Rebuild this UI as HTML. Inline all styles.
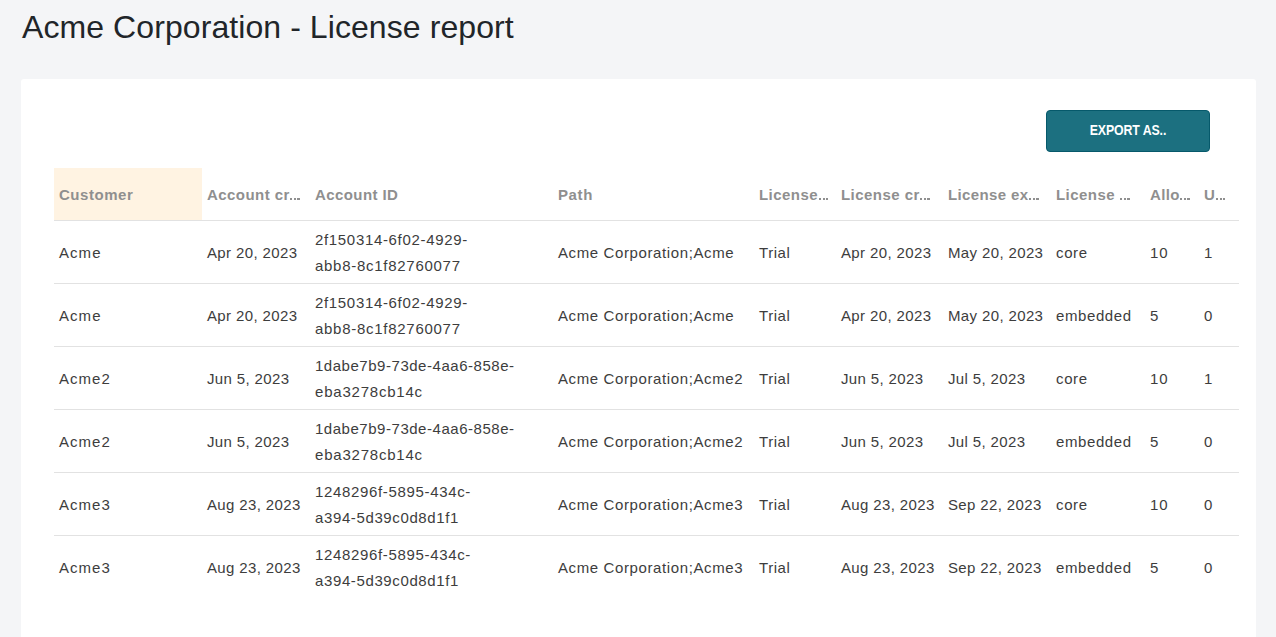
<!DOCTYPE html>
<html>
<head>
<meta charset="utf-8">
<style>
html,body{margin:0;padding:0;}
body{width:1276px;height:637px;overflow:hidden;background:#f4f5f7;position:relative;font-family:"Liberation Sans",sans-serif;}
.title{position:absolute;left:22px;top:7px;font-size:32px;line-height:40px;color:#212529;white-space:nowrap;letter-spacing:0.08px;}
.card{position:absolute;left:21px;top:79px;width:1235px;height:600px;background:#fff;border-radius:3px;}
.btn{position:absolute;left:1046px;top:110px;width:164px;height:42px;box-sizing:border-box;background:#1c7080;border:1px solid #06596b;border-radius:4px;}
.btn span{position:absolute;left:0;top:0;width:162px;line-height:38px;text-align:center;color:#fff;font-size:14px;font-weight:bold;letter-spacing:-0.1px;transform:scaleX(0.88);transform-origin:81px 0;}
.row{position:absolute;left:54px;width:1185px;}
.hdr{top:168px;height:52px;border-bottom:1px solid #e2e2e2;}
.hl{position:absolute;left:0;top:0;width:148px;height:52px;background:#fff3e2;}
.cell{position:absolute;white-space:nowrap;}
.hdr .cell{top:0.5px;height:52px;line-height:52px;font-size:15px;font-weight:bold;color:#8f8f8f;letter-spacing:0.45px;}
.el{display:inline-block;width:9.6px;height:2px;background:repeating-linear-gradient(90deg,#8f8f8f 0,#8f8f8f 2.2px,transparent 2.2px,transparent 3.7px);margin-left:0.6px;vertical-align:baseline;}
.body{height:62px;border-bottom:1px solid #e2e2e2;}
.body .cell{top:1px;height:62px;line-height:25.7px;padding-top:18.15px;box-sizing:border-box;font-size:15px;color:#3d3d3d;}
.body .cell.two{padding-top:5.3px;}
.body.last{border-bottom:none;}
.c1{left:5px}.c2{left:153px}.c3{left:261px}.c4{left:504px}.c5{left:705px}.c6{left:787px}.c7{left:894px}.c8{left:1002px}.c9{left:1096px}.c10{left:1150px}
</style>
</head>
<body>
<div class="title">Acme Corporation - License report</div>
<div class="card"></div>
<div class="btn"><span>EXPORT AS..</span></div>

<div class="row hdr">
  <div class="hl"></div>
  <div class="cell c1" style="letter-spacing:0.53px">Customer</div>
  <div class="cell c2">Account cr<span class="el"></span></div>
  <div class="cell c3" style="letter-spacing:0.42px">Account ID</div>
  <div class="cell c4" style="letter-spacing:0.6px">Path</div>
  <div class="cell c5">License<span class="el"></span></div>
  <div class="cell c6">License cr<span class="el"></span></div>
  <div class="cell c7" style="letter-spacing:0.38px">License ex<span class="el"></span></div>
  <div class="cell c8">License <span class="el"></span></div>
  <div class="cell c9" style="letter-spacing:0.33px">Allo<span class="el"></span></div>
  <div class="cell c10">U<span class="el"></span></div>
</div>
<div class="row body" style="top:221px">
  <div class="cell c1"><span style="letter-spacing:1.05px">Acme</span></div>
  <div class="cell c2"><span style="letter-spacing:0.37px">Apr 20, 2023</span></div>
  <div class="cell c3 two"><span style="letter-spacing:0.67px">2f150314-6f02-4929-</span><br><span style="letter-spacing:0.72px">abb8-8c1f82760077</span></div>
  <div class="cell c4"><span style="letter-spacing:0.61px">Acme Corporation;Acme</span></div>
  <div class="cell c5"><span style="letter-spacing:0.53px">Trial</span></div>
  <div class="cell c6"><span style="letter-spacing:0.37px">Apr 20, 2023</span></div>
  <div class="cell c7"><span style="letter-spacing:0.37px">May 20, 2023</span></div>
  <div class="cell c8"><span style="letter-spacing:0.63px">core</span></div>
  <div class="cell c9"><span style="letter-spacing:0.9px">10</span></div>
  <div class="cell c10"><span style="letter-spacing:0px">1</span></div>
</div>
<div class="row body" style="top:284px">
  <div class="cell c1"><span style="letter-spacing:1.05px">Acme</span></div>
  <div class="cell c2"><span style="letter-spacing:0.37px">Apr 20, 2023</span></div>
  <div class="cell c3 two"><span style="letter-spacing:0.67px">2f150314-6f02-4929-</span><br><span style="letter-spacing:0.72px">abb8-8c1f82760077</span></div>
  <div class="cell c4"><span style="letter-spacing:0.61px">Acme Corporation;Acme</span></div>
  <div class="cell c5"><span style="letter-spacing:0.53px">Trial</span></div>
  <div class="cell c6"><span style="letter-spacing:0.37px">Apr 20, 2023</span></div>
  <div class="cell c7"><span style="letter-spacing:0.37px">May 20, 2023</span></div>
  <div class="cell c8"><span style="letter-spacing:0.6px">embedded</span></div>
  <div class="cell c9"><span style="letter-spacing:0px">5</span></div>
  <div class="cell c10"><span style="letter-spacing:0px">0</span></div>
</div>
<div class="row body" style="top:347px">
  <div class="cell c1"><span style="letter-spacing:1.03px">Acme2</span></div>
  <div class="cell c2"><span style="letter-spacing:0.37px">Jun 5, 2023</span></div>
  <div class="cell c3 two"><span style="letter-spacing:0.53px">1dabe7b9-73de-4aa6-858e-</span><br><span style="letter-spacing:0.79px">eba3278cb14c</span></div>
  <div class="cell c4"><span style="letter-spacing:0.61px">Acme Corporation;Acme2</span></div>
  <div class="cell c5"><span style="letter-spacing:0.53px">Trial</span></div>
  <div class="cell c6"><span style="letter-spacing:0.37px">Jun 5, 2023</span></div>
  <div class="cell c7"><span style="letter-spacing:0.37px">Jul 5, 2023</span></div>
  <div class="cell c8"><span style="letter-spacing:0.63px">core</span></div>
  <div class="cell c9"><span style="letter-spacing:0.9px">10</span></div>
  <div class="cell c10"><span style="letter-spacing:0px">1</span></div>
</div>
<div class="row body" style="top:410px">
  <div class="cell c1"><span style="letter-spacing:1.03px">Acme2</span></div>
  <div class="cell c2"><span style="letter-spacing:0.37px">Jun 5, 2023</span></div>
  <div class="cell c3 two"><span style="letter-spacing:0.53px">1dabe7b9-73de-4aa6-858e-</span><br><span style="letter-spacing:0.79px">eba3278cb14c</span></div>
  <div class="cell c4"><span style="letter-spacing:0.61px">Acme Corporation;Acme2</span></div>
  <div class="cell c5"><span style="letter-spacing:0.53px">Trial</span></div>
  <div class="cell c6"><span style="letter-spacing:0.37px">Jun 5, 2023</span></div>
  <div class="cell c7"><span style="letter-spacing:0.37px">Jul 5, 2023</span></div>
  <div class="cell c8"><span style="letter-spacing:0.6px">embedded</span></div>
  <div class="cell c9"><span style="letter-spacing:0px">5</span></div>
  <div class="cell c10"><span style="letter-spacing:0px">0</span></div>
</div>
<div class="row body" style="top:473px">
  <div class="cell c1"><span style="letter-spacing:1.03px">Acme3</span></div>
  <div class="cell c2"><span style="letter-spacing:0.37px">Aug 23, 2023</span></div>
  <div class="cell c3 two"><span style="letter-spacing:0.66px">1248296f-5895-434c-</span><br><span style="letter-spacing:0.62px">a394-5d39c0d8d1f1</span></div>
  <div class="cell c4"><span style="letter-spacing:0.61px">Acme Corporation;Acme3</span></div>
  <div class="cell c5"><span style="letter-spacing:0.53px">Trial</span></div>
  <div class="cell c6"><span style="letter-spacing:0.37px">Aug 23, 2023</span></div>
  <div class="cell c7"><span style="letter-spacing:0.37px">Sep 22, 2023</span></div>
  <div class="cell c8"><span style="letter-spacing:0.63px">core</span></div>
  <div class="cell c9"><span style="letter-spacing:0.9px">10</span></div>
  <div class="cell c10"><span style="letter-spacing:0px">0</span></div>
</div>
<div class="row body last" style="top:536px">
  <div class="cell c1"><span style="letter-spacing:1.03px">Acme3</span></div>
  <div class="cell c2"><span style="letter-spacing:0.37px">Aug 23, 2023</span></div>
  <div class="cell c3 two"><span style="letter-spacing:0.66px">1248296f-5895-434c-</span><br><span style="letter-spacing:0.62px">a394-5d39c0d8d1f1</span></div>
  <div class="cell c4"><span style="letter-spacing:0.61px">Acme Corporation;Acme3</span></div>
  <div class="cell c5"><span style="letter-spacing:0.53px">Trial</span></div>
  <div class="cell c6"><span style="letter-spacing:0.37px">Aug 23, 2023</span></div>
  <div class="cell c7"><span style="letter-spacing:0.37px">Sep 22, 2023</span></div>
  <div class="cell c8"><span style="letter-spacing:0.6px">embedded</span></div>
  <div class="cell c9"><span style="letter-spacing:0px">5</span></div>
  <div class="cell c10"><span style="letter-spacing:0px">0</span></div>
</div>
</body>
</html>
